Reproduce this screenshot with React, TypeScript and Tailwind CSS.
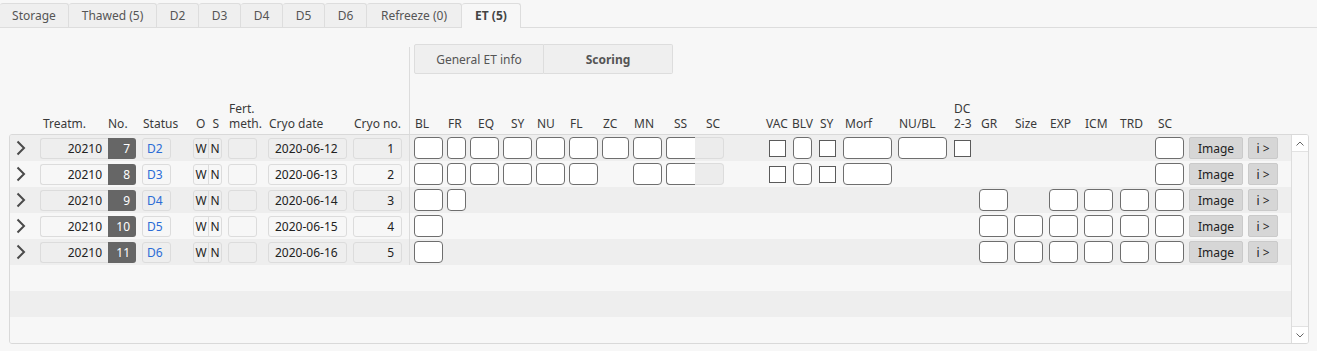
type Col = {
  key: string;
  label: string;
  label2?: string;
  slot: string;
  lcls: string;
  kind: "input" | "check" | "ss" | "sc";
};

const TABS = [
  { label: "Storage", w: "w-[69px]" },
  { label: "Thawed (5)", w: "w-[88px]" },
  { label: "D2", w: "w-[42px]" },
  { label: "D3", w: "w-[42px]" },
  { label: "D4", w: "w-[42px]" },
  { label: "D5", w: "w-[42px]" },
  { label: "D6", w: "w-[42px]" },
  { label: "Refreeze (0)", w: "w-[95px]" },
];

// scoring + right columns, slot = gap before + width
const RIGHT: Col[] = [
  { key: "BL", label: "BL", slot: "ml-[4px] w-[29px]", lcls: "ml-[1px]", kind: "input" },
  { key: "FR", label: "FR", slot: "ml-[4px] w-[19px]", lcls: "ml-[1px]", kind: "input" },
  { key: "EQ", label: "EQ", slot: "ml-[4px] w-[29px]", lcls: "ml-[8px]", kind: "input" },
  { key: "SY", label: "SY", slot: "ml-[4px] w-[29px]", lcls: "ml-[8px]", kind: "input" },
  { key: "NU", label: "NU", slot: "ml-[4px] w-[29px]", lcls: "ml-[1px]", kind: "input" },
  { key: "FL", label: "FL", slot: "ml-[4px] w-[29px]", lcls: "ml-[1px]", kind: "input" },
  { key: "ZC", label: "ZC", slot: "ml-[4px] w-[27px]", lcls: "ml-[1px]", kind: "input" },
  { key: "MN", label: "MN", slot: "ml-[4px] w-[29px]", lcls: "ml-[1px]", kind: "input" },
  { key: "SS", label: "SS", slot: "ml-[4px] w-[29px]", lcls: "ml-[8px]", kind: "ss" },
  { key: "SC", label: "SC", slot: "w-[29px]", lcls: "ml-[11px]", kind: "sc" },
  { key: "VAC", label: "VAC", slot: "ml-[45px] w-[17px]", lcls: "-ml-[3px]", kind: "check" },
  { key: "BLV", label: "BLV", slot: "ml-[7px] w-[19px]", lcls: "-ml-[1px]", kind: "input" },
  { key: "SY2", label: "SY", slot: "ml-[7px] w-[17px]", lcls: "ml-[1px]", kind: "check" },
  { key: "Morf", label: "Morf", slot: "ml-[7px] w-[49px]", lcls: "ml-[2px]", kind: "input" },
  { key: "NUBL", label: "NU/BL", slot: "ml-[6px] w-[49px]", lcls: "ml-[1px]", kind: "input" },
  { key: "DC", label: "DC", label2: "2-3", slot: "ml-[7px] w-[17px]", lcls: "", kind: "check" },
  { key: "GR", label: "GR", slot: "ml-[8px] w-[29px]", lcls: "ml-[2px]", kind: "input" },
  { key: "Size", label: "Size", slot: "ml-[6px] w-[29px]", lcls: "ml-[1px]", kind: "input" },
  { key: "EXP", label: "EXP", slot: "ml-[6px] w-[29px]", lcls: "ml-[1px]", kind: "input" },
  { key: "ICM", label: "ICM", slot: "ml-[6px] w-[29px]", lcls: "ml-[1px]", kind: "input" },
  { key: "TRD", label: "TRD", slot: "ml-[7px] w-[29px]", lcls: "", kind: "input" },
  { key: "SC2", label: "SC", slot: "ml-[6px] w-[29px]", lcls: "ml-[3px]", kind: "input" },
];

type Row = { no: number; status: string; date: string; cryo: number; fields: string[] };

const ROWS: Row[] = [
  {
    no: 7, status: "D2", date: "2020-06-12", cryo: 1,
    fields: ["BL", "FR", "EQ", "SY", "NU", "FL", "ZC", "MN", "SS", "SC", "VAC", "BLV", "SY2", "Morf", "NUBL", "DC", "SC2"],
  },
  {
    no: 8, status: "D3", date: "2020-06-13", cryo: 2,
    fields: ["BL", "FR", "EQ", "SY", "NU", "FL", "MN", "SS", "SC", "VAC", "BLV", "SY2", "Morf", "SC2"],
  },
  { no: 9, status: "D4", date: "2020-06-14", cryo: 3, fields: ["BL", "FR", "GR", "EXP", "ICM", "TRD", "SC2"] },
  { no: 10, status: "D5", date: "2020-06-15", cryo: 4, fields: ["BL", "GR", "Size", "EXP", "ICM", "TRD", "SC2"] },
  { no: 11, status: "D6", date: "2020-06-16", cryo: 5, fields: ["BL", "GR", "Size", "EXP", "ICM", "TRD", "SC2"] },
];

function Cell({ col, on }: { col: Col; on: boolean }) {
  if (!on) return <div className={`${col.slot} shrink-0`} />;
  if (col.kind === "check")
    return (
      <div className={`${col.slot} shrink-0`}>
        <div className="h-[17px] w-[17px] border border-[#5a5a5a] bg-white" />
      </div>
    );
  if (col.kind === "ss")
    return <div className={`${col.slot} h-[22px] shrink-0 rounded-l-[4px] border border-r-0 border-[#6e6e6e] bg-white`} />;
  if (col.kind === "sc")
    return <div className={`${col.slot} h-[22px] shrink-0 rounded-r-[4px] border border-l-0 border-[#dcdcdc] bg-[#ececec]`} />;
  return <div className={`${col.slot} h-[22px] shrink-0 rounded-[4px] border border-[#6e6e6e] bg-white`} />;
}

function Chevron() {
  return (
    <svg width="10" height="16" viewBox="0 0 10 16" className="ml-[6px]">
      <polyline points="1.5,1.5 8,8 1.5,14.5" fill="none" stroke="#4a4a4a" strokeWidth="2" />
    </svg>
  );
}

function DataRow({ row, i }: { row: Row; i: number }) {
  return (
    <div className={`flex h-[26px] items-center ${i % 2 === 0 ? "bg-[#eeeeee]" : "bg-[#f7f7f7]"}`}>
      <div className="flex w-[30px] shrink-0 items-center">
        <Chevron />
      </div>
      <div className="flex h-[21px] w-[68px] shrink-0 items-center justify-end rounded-l-[3px] border border-r-0 border-[#dcdcdc] pr-[6px]">
        20210
      </div>
      <div className="flex h-[21px] w-[28px] shrink-0 items-center justify-end rounded-r-[3px] bg-[#666666] pr-[6px] text-white">
        {row.no}
      </div>
      <div className="ml-[6px] flex h-[21px] w-[29px] shrink-0 items-center rounded-[3px] border border-[#dcdcdc] pl-[4px] text-[#2b6cd6]">
        {row.status}
      </div>
      <div className="ml-[22px] flex h-[21px] w-[29px] shrink-0 rounded-[3px] border border-[#dcdcdc]">
        <div className="flex w-[15px] items-center justify-center border-r border-[#dcdcdc]">W</div>
        <div className="flex flex-1 items-center justify-center">N</div>
      </div>
      <div className="ml-[6px] h-[21px] w-[29px] shrink-0 rounded-[3px] border border-[#dcdcdc]" />
      <div className="ml-[11px] flex h-[21px] w-[79px] shrink-0 items-center rounded-[3px] border border-[#dcdcdc] pl-[6px]">
        {row.date}
      </div>
      <div className="ml-[6px] flex h-[21px] w-[49px] shrink-0 items-center justify-end rounded-[3px] border border-[#dcdcdc] pr-[7px]">
        {row.cryo}
      </div>
      <div className="ml-[7px] h-full w-px shrink-0 bg-[#dcdcdc]" />
      {RIGHT.map((c) => (
        <Cell key={c.key} col={c} on={row.fields.includes(c.key)} />
      ))}
      <div className="ml-[5px] flex h-[22px] w-[54px] shrink-0 items-center justify-center rounded-[2px] border border-[#cacaca] bg-[#d6d6d6]">
        Image
      </div>
      <div className="ml-[5px] flex h-[22px] w-[30px] shrink-0 items-center justify-center rounded-[2px] border border-[#cacaca] bg-[#d6d6d6]">
        i &gt;
      </div>
    </div>
  );
}

export default function App() {
  return (
    <div className="h-[351px] w-[1317px] overflow-hidden bg-[#f7f7f7] font-['Noto_Sans',sans-serif] text-[12px] leading-[15px] text-[#333333]">
      {/* Tabs */}
      <div className="flex h-[28px] items-end border-b border-[#dddddd]">
        {TABS.map((t) => (
          <div
            key={t.label}
            className={`${t.w} flex h-[24px] shrink-0 items-center justify-center rounded-t-[3px] border-t border-r border-[#dddddd] bg-[#efefef] text-[#555555]`}
          >
            {t.label}
          </div>
        ))}
        <div className="-mb-px flex h-[25px] w-[59px] shrink-0 items-center justify-center rounded-t-[3px] border-t border-r border-[#dddddd] bg-[#f7f7f7] pb-px font-bold text-[#444444]">
          ET (5)
        </div>
      </div>

      {/* Column header */}
      <div className="flex h-[106px] pl-[10px] text-[#3a3a3a]">
        <div className="flex w-[399px] shrink-0 items-end pb-[3px] whitespace-nowrap">
          <div className="w-[30px] shrink-0" />
          <div className="w-[68px] shrink-0 pl-[3px]">Treatm.</div>
          <div className="w-[28px] shrink-0">No.</div>
          <div className="ml-[6px] w-[29px] shrink-0 pl-px">Status</div>
          <div className="ml-[22px] flex w-[29px] shrink-0">
            <span className="ml-[3px]">O</span>
            <span className="ml-[7px]">S</span>
          </div>
          <div className="ml-[6px] w-[29px] shrink-0 pl-px">
            <div>Fert.</div>
            <div>meth.</div>
          </div>
          <div className="ml-[11px] w-[79px] shrink-0 pl-px">Cryo date</div>
          <div className="ml-[6px] w-[49px] shrink-0 pl-px">Cryo no.</div>
        </div>
        <div className="mt-[19px] w-px shrink-0 bg-[#dcdcdc]" />
        <div className="flex flex-col">
          <div className="ml-[4px] mt-[16px] flex h-[30px] text-[#555555]">
            <div className="flex w-[130px] items-center justify-center rounded-l-[2px] border border-[#dddddd] bg-[#efefef]">
              General ET info
            </div>
            <div className="flex w-[129px] items-center justify-center rounded-r-[2px] border border-l-0 border-[#dddddd] bg-[#efefef] font-bold">
              Scoring
            </div>
          </div>
          <div className="flex-1" />
          <div className="flex items-end pb-[3px]">
            {RIGHT.map((c) => (
              <div key={c.key} className={`${c.slot} shrink-0 whitespace-nowrap`}>
                <div className={c.lcls}>
                  {c.label2 ? (
                    <>
                      <div>{c.label}</div>
                      <div>{c.label2}</div>
                    </>
                  ) : (
                    c.label
                  )}
                </div>
              </div>
            ))}
          </div>
        </div>
      </div>

      {/* Grid panel */}
      <div className="ml-[9px] flex h-[210px] w-[1300px] overflow-hidden rounded-[3px] border border-[#d9d9d9] text-[#222222]">
        <div className="flex-1">
          {ROWS.map((r, i) => (
            <DataRow key={r.no} row={r} i={i} />
          ))}
          <div className="h-[26px] bg-[#f7f7f7]" />
          <div className="h-[26px] bg-[#eeeeee]" />
          <div className="h-[26px] bg-[#f7f7f7]" />
        </div>
        <div className="flex w-[17px] shrink-0 flex-col border-l border-[#dddddd] bg-[#f7f7f7]">
          <div className="flex h-[17px] items-center justify-center border-b border-[#e2e2e2] bg-white">
            <svg width="8" height="5" viewBox="0 0 8 5">
              <polyline points="0.5,4.5 4,1 7.5,4.5" fill="none" stroke="#666666" strokeWidth="1" />
            </svg>
          </div>
          <div className="flex-1" />
          <div className="flex h-[17px] items-center justify-center border-t border-[#e2e2e2] bg-white">
            <svg width="8" height="5" viewBox="0 0 8 5">
              <polyline points="0.5,0.5 4,4 7.5,0.5" fill="none" stroke="#666666" strokeWidth="1" />
            </svg>
          </div>
        </div>
      </div>
    </div>
  );
}
